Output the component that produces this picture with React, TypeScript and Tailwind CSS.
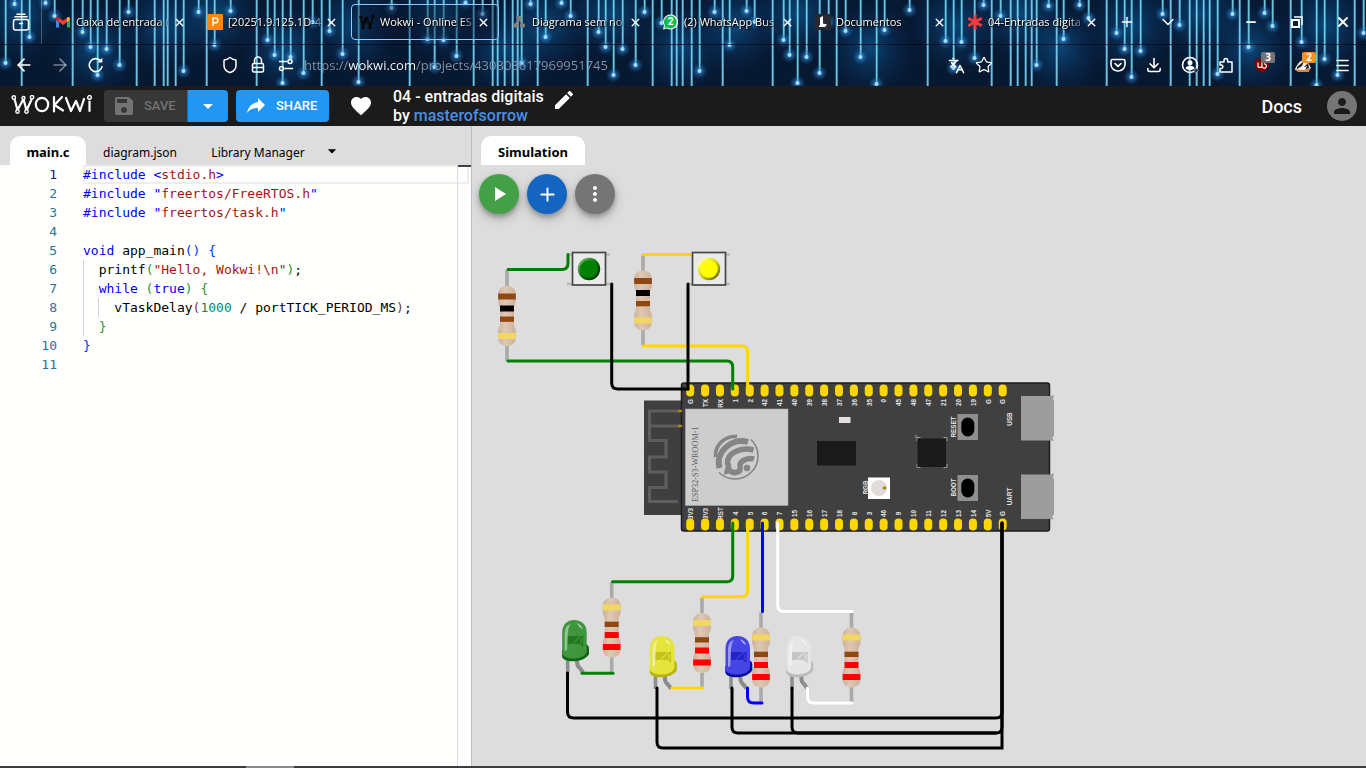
import React from "react";
import { ArrowLeft, ArrowRight, ChevronDown, Download, Languages, Menu, Minus, Plus, Shield, Star, X } from "lucide-react";
import { MdArrowDropDown, MdEdit, MdFavorite, MdMoreVert, MdPerson, MdPlayArrow, MdSave } from "react-icons/md";

/* ---------- Browser theme ---------- */

const FULL_BEAMS = [
  21, 72, 136, 154, 163, 167, 175, 206, 256, 321, 409, 473, 492, 497, 504, 512, 517, 537, 587, 652, 671, 676, 682, 691,
  722, 772, 836, 927, 991, 1010, 1017, 1025, 1031, 1056, 1106, 1170, 1189, 1196, 1203, 1209, 1239, 1290, 1354,
];

const DROPS: [number, number][] = [
  [14, 4], [45, 3], [54, 16], [29, 37], [5, 63], [82, 32], [90, 47], [106, 49], [97, 75], [119, 65], [128, 12],
  [183, 71], [198, 12], [230, 11], [214, 45], [267, 40], [274, 55], [290, 57], [282, 83], [303, 73], [312, 22],
  [329, 31], [342, 54], [358, 82], [391, 8], [427, 39], [443, 40], [456, 56], [434, 67], [482, 14], [465, 3],
  [530, 4], [561, 3], [545, 37], [570, 16], [598, 32], [605, 47], [622, 49], [613, 75], [635, 65], [644, 12],
  [521, 63], [661, 23], [699, 71], [714, 12], [729, 45], [746, 11], [754, 22], [783, 40], [789, 55], [806, 57], [797, 83],
  [819, 73], [828, 22], [845, 31], [860, 57], [884, 30], [876, 84], [909, 10], [945, 41], [953, 68], [961, 42],
  [974, 58], [983, 5], [1000, 16], [1036, 65], [1048, 6], [1079, 5], [1063, 39], [1088, 18], [1116, 33],
  [1124, 49], [1140, 51], [1131, 77], [1162, 14], [1179, 25], [1217, 74], [1232, 14], [1264, 13], [1248, 47],
  [1272, 26], [1301, 42], [1324, 59], [1316, 85], [1337, 75], [1363, 33],
];

const CLOUDS = [20, 95, 165, 215, 285, 355, 440, 505, 545, 610, 680, 735, 797, 870, 955, 1020, 1060, 1131, 1200, 1250, 1325];

function Wallpaper() {
  return (
    <svg className="absolute inset-0 h-full w-full" aria-hidden="true">
      <defs>
        <radialGradient id="cloud">
          <stop offset="0" stopColor="#0d5a96" stopOpacity="0.7" />
          <stop offset="1" stopColor="#08305f" stopOpacity="0" />
        </radialGradient>
        <radialGradient id="glow">
          <stop offset="0" stopColor="#4fb4ff" stopOpacity="0.75" />
          <stop offset="1" stopColor="#1566b4" stopOpacity="0" />
        </radialGradient>
      </defs>
      <rect width="100%" height="100%" fill="#071831" />
      {CLOUDS.map((x, i) => (
        <ellipse key={x} cx={x} cy={i % 3 === 0 ? 14 : i % 3 === 1 ? 48 : 26} rx="46" ry="50" fill="url(#cloud)" />
      ))}
      {FULL_BEAMS.map((x) => (
        <g key={x}>
          <rect x={x - 1} width="3" height="86" fill="#2f8fc0" opacity="0.45" />
          <rect x={x} width="1.5" height="86" fill="#8fdcf2" opacity="0.8" />
        </g>
      ))}
      {DROPS.map(([x, y]) => (
        <g key={`${x}-${y}`}>
          <rect x={x - 1} width="3" height={y} fill="#2f8fc0" opacity="0.45" />
          <rect x={x} width="1.5" height={y} fill="#7fe0ee" opacity="0.8" />
          <circle cx={x + 0.5} cy={y} r="8" fill="url(#glow)" />
          <circle cx={x + 0.5} cy={y} r="2" fill="#a5dcff" />
        </g>
      ))}
      <rect y="44" width="100%" height="1" fill="#020a18" opacity="0.7" />
    </svg>
  );
}

const GmailIcon = () => (
  <svg viewBox="0 0 16 16" className="size-4">
    <path d="M1 4.5V13.5H4V7Z" fill="#4285f4" />
    <path d="M15 4.5V13.5H12V7Z" fill="#34a853" />
    <path d="M1 4.5Q1 2.5 3 3L4 3.7V8L1 5.8Z" fill="#c5221f" />
    <path d="M4 3.7L8 6.8L12 3.7V8L8 11L4 8Z" fill="#ea4335" />
    <path d="M15 4.5Q15 2.5 13 3L12 3.7V8L15 5.8Z" fill="#fbbc04" />
  </svg>
);

const PIcon = () => (
  <svg viewBox="0 0 16 16" className="size-4">
    <rect width="16" height="16" rx="1" fill="#ff8a00" />
    <path d="M6 12V4H8.5a2.4 2.4 0 0 1 0 4.8H6" fill="none" stroke="#fff" strokeWidth="1.4" />
  </svg>
);

const WokwiIcon = () => (
  <svg viewBox="0 0 16 16" className="size-4" fill="none" stroke="#070707" strokeWidth="1.8" strokeLinecap="round">
    <path d="M2 3L4 13L8 4L11 13L14 3M4 13L6 4M11 13L9 9" />
    <g fill="#070707" strokeWidth="1">
      <circle cx="2" cy="3" r="1.2" />
      <circle cx="8" cy="4" r="1" />
      <circle cx="14" cy="2.5" r="1.3" />
      <circle cx="4" cy="13.5" r="1.2" />
      <circle cx="11" cy="13.5" r="1.2" />
    </g>
  </svg>
);

const DiagramIcon = () => (
  <svg viewBox="0 0 16 16" className="size-4" fill="#85817e">
    <rect x="5.500" y="2" width="5" height="4" rx="1" />
    <rect x="2" y="9.500" width="5" height="4" rx="1" />
    <rect x="9" y="9.500" width="5" height="4" rx="1" />
    <path d="M8 5L4.5 10.500M8 5L11.500 10.500" stroke="#85817e" strokeWidth="1.5" />
  </svg>
);

const WhatsAppIcon = () => (
  <svg viewBox="0 0 16 16" className="size-4">
    <path d="M0 15.5L1 11.6A7.500 7.500 0 1 1 4 14.6Z" fill="#fff" />
    <path d="M1.300 14.3L2 11.6A6.400 6.400 0 1 1 4.200 13.6Z" fill="#13b955" />
    <text x="7.6" y="11.4" textAnchor="middle" fontSize="10" fontWeight="700" fill="#fff" fontFamily="Roboto, sans-serif">2</text>
  </svg>
);

const DocIcon = () => (
  <svg viewBox="0 0 16 16" className="size-4">
    <rect width="16" height="16" fill="#292a30" />
    <path d="M5 3.5L8 2V9.5L12 10.5L10 13H4V11.5H5Z" fill="#fff" />
  </svg>
);

const AsteriskIcon = () => (
  <svg viewBox="0 0 16 16" className="size-4" stroke="#ff3b3b" strokeWidth="3">
    <path d="M8 .5V15.5M1.3 4.2L14.7 11.8M14.7 4.2L1.3 11.8" />
  </svg>
);

const TABS = [
  { title: "Caixa de entrada (", Icon: GmailIcon },
  { title: "[20251.9.125.1D-4", Icon: PIcon },
  { title: "Wokwi - Online ES", Icon: WokwiIcon, active: true },
  { title: "Diagrama sem no", Icon: DiagramIcon },
  { title: "(2) WhatsApp Bus", Icon: WhatsAppIcon },
  { title: "Documentos", Icon: DocIcon },
  { title: "04-Entradas digita", Icon: AsteriskIcon },
];

function BrowserTab({ title, Icon, active }: { title: string; Icon: React.FC; active?: boolean }) {
  return (
    <div className="min-w-0 max-w-[152px] flex-1 py-1 pl-px pr-[3px]">
      <div
        className={`flex h-9 items-center rounded border px-[7px] ${active ? "border-[#8fcaff] bg-[#07142c]/40" : "border-transparent"}`}
      >
        <button className="flex min-w-0 flex-1 items-center gap-[5px] text-left">
          <span className="shrink-0"><Icon /></span>
          <span className="flex-1 overflow-hidden whitespace-nowrap text-[11px] leading-5 [mask-image:linear-gradient(to_right,black_84%,rgba(0,0,0,0.2)_100%)] [text-shadow:0_0_2px_#000,1px_1px_1px_#000]">
            {title}
          </span>
        </button>
        <button aria-label={`Fechar ${title}`} className="flex size-4 shrink-0 items-center justify-center">
          <X size={13} strokeWidth={2.6} />
        </button>
      </div>
    </div>
  );
}

const IconButton = ({ label, className = "w-9", children }: { label: string; className?: string; children: React.ReactNode }) => (
  <button aria-label={label} className={`flex h-8 shrink-0 items-center justify-center ${className}`}>
    {children}
  </button>
);

function BrowserChrome() {
  return (
    <header className="relative flex h-[86px] shrink-0 flex-col overflow-hidden bg-[#06152f] font-['Open_Sans',sans-serif] text-white">
      <Wallpaper />
      <div className="relative flex h-11 items-center">
        <div className="mr-1 flex h-11 w-[42px] shrink-0 items-center justify-center border-r border-white/25">
          <button aria-label="Firefox View">
            <svg viewBox="0 0 18 18" className="size-[18px]" fill="none" stroke="currentColor" strokeWidth="1.5" strokeLinecap="round">
              <rect x="1.5" y="6.5" width="15" height="10.5" rx="2" />
              <path d="M3 3.8H15M5 1.2H13M7.5 10.5H10.5" />
            </svg>
          </button>
        </div>
        <nav className="flex min-w-0 flex-1">
          {TABS.map((t) => (
            <BrowserTab key={t.title} {...t} />
          ))}
          <div className="flex items-center self-center">
            <IconButton label="Nova aba" className="w-[34px]"><Plus size={16} strokeWidth={2} /></IconButton>
            <IconButton label="Listar abas" className="w-12"><ChevronDown size={20} strokeWidth={1.8} /></IconButton>
          </div>
        </nav>
        <IconButton label="Minimizar" className="w-[46px]"><Minus size={14} strokeWidth={3} /></IconButton>
        <IconButton label="Restaurar" className="w-[46px]">
          <svg viewBox="0 0 12 12" className="size-3" fill="none" stroke="currentColor">
            <rect x="1" y="4" width="7" height="7" strokeWidth="2" />
            <path d="M3 1H11V9" strokeWidth="1.4" />
          </svg>
        </IconButton>
        <IconButton label="Fechar" className="w-[46px]"><X size={16} strokeWidth={2.8} /></IconButton>
      </div>

      <div className="relative flex h-[42px] items-center px-[6px]">
        <IconButton label="Voltar"><ArrowLeft size={20} strokeWidth={2} /></IconButton>
        <IconButton label="Avançar"><ArrowRight size={20} strokeWidth={2} className="text-white/45" /></IconButton>
        <IconButton label="Recarregar">
          <svg viewBox="0 0 16 16" className="size-4" fill="none" stroke="currentColor" strokeWidth="1.6">
            <path d="M14.2 9.2A6.5 6.5 0 1 1 12.3 3.4" />
            <path d="M9.5 5.5H14.3V.8Z" fill="currentColor" stroke="none" />
          </svg>
        </IconButton>
        <div className="ml-[102px] flex min-w-0 flex-1 items-center">
          <IconButton label="Proteção" className="w-7"><Shield size={18} strokeWidth={2} /></IconButton>
          <IconButton label="Conexão segura" className="w-7">
            <svg viewBox="0 0 16 18" className="h-[18px] w-4" fill="none" stroke="currentColor" strokeWidth="1.5">
              <rect x="2.5" y="7.5" width="11" height="8.5" rx="1.5" />
              <path d="M4.5 7.5V4.5A3.5 3.5 0 0 1 11.5 4.5V7.5M2.5 11.5H13.5" />
            </svg>
          </IconButton>
          <IconButton label="Permissões" className="w-7">
            <svg viewBox="0 0 16 16" className="size-4" fill="none" stroke="currentColor" strokeWidth="1.5">
              <path d="M1 4.5H9M6.5 11.5H15" />
              <circle cx="12" cy="4.5" r="2" />
              <circle cx="3.5" cy="11.5" r="2" />
            </svg>
          </IconButton>
          <input
            aria-label="Endereço"
            readOnly
            value="https://wokwi.com/projects/430303617969951745"
            className="ml-1 h-7 min-w-0 flex-1 bg-[linear-gradient(to_right,#8793a5_45px,#fff_45px,#fff_112px,#8793a5_112px)] bg-clip-text text-[13px] text-transparent outline-none"
          />
          <IconButton label="Traduzir" className="w-7"><Languages size={17} strokeWidth={2.2} /></IconButton>
          <IconButton label="Favoritar" className="w-7"><Star size={18} strokeWidth={1.7} /></IconButton>
        </div>
        <div className="ml-[102px] flex items-center">
          <IconButton label="Pocket">
            <svg viewBox="0 0 16 16" className="size-4" fill="none" stroke="currentColor" strokeWidth="1.6" strokeLinecap="round" strokeLinejoin="round">
              <path d="M2.5 2.5H13.5Q15 2.5 15 4V7.5A7 6.5 0 0 1 1 7.5V4Q1 2.5 2.5 2.5ZM5 6.5L8 9.3L11 6.5" />
            </svg>
          </IconButton>
          <IconButton label="Downloads">
            <svg viewBox="0 0 16 16" className="size-4" fill="none" stroke="currentColor" strokeWidth="1.6" strokeLinecap="round" strokeLinejoin="round">
              <path d="M8 1.5V10.5M4 6.800L8 10.800L12 6.800M1.800 11.500V12.500Q1.800 14.500 3.800 14.500H12.200Q14.200 14.500 14.200 12.500V11.500" />
            </svg>
          </IconButton>
          <IconButton label="Conta">
            <svg viewBox="0 0 18 18" className="size-[18px]">
              <circle cx="9" cy="9" r="7.5" fill="none" stroke="currentColor" strokeWidth="1.6" />
              <circle cx="9" cy="6.8" r="2.5" fill="currentColor" />
              <path d="M4.5 12.5Q5 9.8 9 9.8T13.5 12.5Q9 15.8 4.5 12.5Z" fill="currentColor" />
              <circle cx="15" cy="14.5" r="2" fill="#17304d" stroke="#8797a8" />
            </svg>
          </IconButton>
          <IconButton label="Extensões">
            <svg viewBox="0 0 16 16" className="size-4" fill="none" stroke="currentColor" strokeWidth="1.5" strokeLinejoin="round">
              <path d="M2 15V11.5H3.5A1.8 1.8 0 0 0 3.5 8H2V5H6V3.2A1.8 1.8 0 0 1 9.6 3.2V5H14V15Z" />
            </svg>
          </IconButton>
          <div className="relative">
            <IconButton label="uBlock Origin">
              <svg viewBox="0 0 16 16" className="size-4">
                <path d="M8 1L15 3V8Q14 13 8 16Q2 13 1 8V3Z" fill="#800000" />
                <path d="M4 5.5V8.5A2 2 0 0 0 8 8.5V5.5M8 8.5A2.2 2.2 0 1 0 10 6.8" stroke="#fff" strokeWidth="1.2" fill="none" />
              </svg>
            </IconButton>
            <span className="absolute left-[17px] top-[3px] flex h-[11px] w-[14px] items-center justify-center rounded-[2px] bg-[#737373] text-[10px] font-bold">3</span>
          </div>
          <div className="relative ml-[5px]">
            <IconButton label="Privacy Badger">
              <svg viewBox="0 0 16 16" className="size-4">
                <path d="M0 12Q3 5 8 3L12 4Q14 7 16 11L13 14Q6 16 0 13Z" fill="#eee" />
                <path d="M2 10L9 4L7 9L2 12ZM9 10L13 6L14 11L10 13Z" fill="#222" />
                <path d="M0 12L6 13L15 11L14 15H3Z" fill="#d98241" />
                <path d="M5 12L12 9L10 13Z" fill="#fff" />
              </svg>
            </IconButton>
            <span className="absolute left-[17px] top-[3px] flex h-[11px] w-[14px] items-center justify-center rounded-[2px] bg-[#f19226] text-[10px] font-bold">2</span>
          </div>
          <IconButton label="Menu" className="ml-[3px] w-9"><Menu size={17} strokeWidth={2} /></IconButton>
        </div>
      </div>
    </header>
  );
}

/* ---------- Wokwi header ---------- */

const WokwiLogo = () => (
  <svg viewBox="0 0 82 22" className="h-[22px] w-[82px]" fill="none" stroke="#fff" strokeWidth="2.2" strokeLinecap="round" strokeLinejoin="round" role="img" aria-label="Wokwi">
    <path d="M3.5 4L6.5 15L12.5 4L15.5 15.5L21 3.5" />
    <ellipse cx="31" cy="9.5" rx="6.2" ry="6.7" />
    <path d="M43 2V16.5M51 2L43.5 10L52 15.5" />
    <path d="M55 3L60 16L65 6L69 16L73 4" />
    <path d="M78.5 6.5V16" />
    <g fill="#1b1b1b" strokeWidth="1.4">
      <circle cx="2.8" cy="2.5" r="1.7" />
      <circle cx="12.5" cy="3" r="1.5" />
      <circle cx="21" cy="2.2" r="1.7" />
      <circle cx="6.5" cy="16.5" r="1.7" />
      <circle cx="15.5" cy="16.5" r="1.7" />
      <circle cx="78.5" cy="2.4" r="1.8" />
    </g>
  </svg>
);

function AppHeader() {
  return (
    <header className="flex h-10 shrink-0 items-center bg-[#1b1b1b] px-[9px] font-['Roboto',sans-serif] text-white">
      <a href="#home" className="ml-[2px]"><WokwiLogo /></a>
      <div className="ml-[11px] flex h-8 overflow-hidden rounded">
        <button disabled className="flex w-[84px] items-center gap-2 border-r border-[#5b5b5b] bg-[#373737] pl-2 text-[13px] font-medium text-[#737373]">
          <MdSave size={24} />
          <span>SAVE</span>
        </button>
        <button aria-label="Mais opções de salvar" className="flex w-10 items-center justify-center bg-[#2196f3]">
          <MdArrowDropDown size={24} />
        </button>
      </div>
      <button className="ml-2 flex h-8 w-[93px] items-center gap-2 rounded bg-[#2196f3] pl-2 text-[13px] font-medium">
        <svg viewBox="0 0 24 24" className="size-6" fill="currentColor">
          <path d="M21 11L14 4V8C7 9 4 14 3 19C5.5 15.5 9 13.9 14 13.9V18Z" />
        </svg>
        <span>SHARE</span>
      </button>
      <button aria-label="Curtir" className="ml-5"><MdFavorite size={24} /></button>
      <div className="ml-5 text-[16px] font-medium leading-[19px]">
        <h1>04 - entradas digitais</h1>
        <p>by <a href="#user" className="text-[#4a8fe7]">masterofsorrow</a></p>
      </div>
      <button aria-label="Editar título" className="mb-3 ml-2"><MdEdit size={24} /></button>
      <a href="#docs" className="ml-auto text-[18px] font-medium">Docs</a>
      <button aria-label="Conta" className="ml-[25px] flex size-[30px] items-center justify-center rounded-full bg-[#757575] text-[#1b1b1b]">
        <MdPerson size={24} />
      </button>
    </header>
  );
}

/* ---------- Editor ---------- */

const K = "text-[#0000ff]";
const S = "text-[#a31515]";
const B1 = "text-[#0431fa]";
const B2 = "text-[#319331]";
const B3 = "text-[#7b3814]";
const N = "text-[#098658]";

const CODE: [string, string][][] = [
  [["#include <", K], ["stdio.h", S], [">", K]],
  [["#include \"", K], ["freertos/FreeRTOS.h", S], ["\"", K]],
  [["#include \"", K], ["freertos/task.h", S], ["\"", K]],
  [],
  [["void", K], [" app_main", ""], ["() {", B1]],
  [["  printf", ""], ["(", B2], ["\"Hello, Wokwi!\\n\"", S], [")", B2], [";", ""]],
  [["  ", ""], ["while", K], [" (", B2], ["true", K], [") {", B2]],
  [["    vTaskDelay", ""], ["(", B3], ["1000", N], [" / portTICK_PERIOD_MS", ""], [")", B3], [";", ""]],
  [["  }", B2]],
  [["}", B1]],
  [],
];

function EditorPane() {
  return (
    <section className="flex w-[472px] shrink-0 flex-col border-r border-[#bdbdbd] bg-[#fffffe]">
      <div role="tablist" className="flex h-[39px] items-end bg-[#dddddd] pl-[10px] font-['Noto_Sans',sans-serif] text-black">
        <button role="tab" aria-selected="true" className="h-[29px] w-[76px] rounded-t-[10px] bg-white pt-1 text-[13px] font-bold">main.c</button>
        <button role="tab" className="h-[29px] w-[108px] pt-1 text-[12px]">diagram.json</button>
        <button role="tab" className="h-[29px] w-32 pt-1 text-[12px]">Library Manager</button>
        <button aria-label="Mais arquivos" className="flex h-[29px] items-center"><MdArrowDropDown size={20} /></button>
      </div>
      <div className="flex flex-1 font-['DejaVu_Sans_Mono',monospace] text-[13px] leading-[19px]">
        <ol className="w-[57px] shrink-0 text-right text-[#237893]">
          {CODE.map((_, i) => (
            <li key={i} className={i === 0 ? "text-[#0b216f]" : ""}>{i + 1}</li>
          ))}
        </ol>
        <pre className="ml-[26px] min-w-0 flex-1 font-['DejaVu_Sans_Mono',monospace] text-black">
          {CODE.map((line, i) => (
            <div key={i} className={`relative h-[19px] ${i === 0 ? "-mr-3 shadow-[inset_0_0_0_2px_#eeeeee]" : ""}`}>
              {i > 4 && i < 9 && <span className="absolute inset-y-0 left-0 w-px bg-[#d3d3d3]" />}
              {i === 7 && <span className="absolute inset-y-0 left-[15px] w-px bg-[#d3d3d3]" />}
              {line.map(([text, color], j) => (
                <span key={j} className={color}>{text}</span>
              ))}
            </div>
          ))}
        </pre>
        <div className="relative flex w-[14px] flex-col border-l border-[#dddddd]">
          <span className="h-[2px] bg-[#424242]" />
        </div>
      </div>
    </section>
  );
}

/* ---------- Circuit ---------- */

function Resistor({ x, y, bands, flip }: { x: number; y: number; bands: string[]; flip?: boolean }) {
  return (
    <g transform={flip ? `translate(${x} ${y + 91}) scale(1 -1)` : `translate(${x} ${y})`}>
      <path d="M0 0V91" stroke="#aaa" strokeWidth="3.6" />
      <path
        d="M0 16C-6 16-9 20-9 25V30C-9 34-7 35-7 38V54C-7 57-9 58-9 62V67C-9 72-6 76 0 76S9 72 9 67V62C9 58 7 57 7 54V38C7 35 9 34 9 30V25C9 20 6 16 0 16Z"
        fill="url(#resistor)"
      />
      <rect x="-8.8" y="23.5" width="17.6" height="6" fill={bands[0]} />
      <rect x="-7" y="35.5" width="14" height="6" fill={bands[1]} />
      <rect x="-7" y="46.5" width="14" height="5.3" fill={bands[2]} />
      <rect x="-8.8" y="63" width="17.6" height="6" fill="#f1d863" />
    </g>
  );
}

const BROWN = "#8f4814";
const R1K = [BROWN, "#000", BROWN];
const R220 = ["#f00", "#f00", BROWN];

function Led({ x, y, body, dark, side }: { x: number; y: number; body: string; dark: string; side: string }) {
  return (
    <g transform={`translate(${x} ${y})`}>
      <path d="M6 38V53" stroke="#8f8f8f" strokeWidth="3.6" />
      <path d="M15.5 38V43Q15.5 46 18 48L21.5 52.5" stroke="#8c8c8c" strokeWidth="4" fill="none" />
      <path d="M24.5 24Q27.5 26 27.3 28V34C24 42 4 44 .3 37V30Z" fill={side} />
      <path d="M.5 12.5C.5 4 6 0 12.5 0S25 4 25 12.5V32C23 40 5 41 .5 34.5Z" fill={body} />
      <path d="M.5 34.5C5 41 23 40 25 32" fill="none" stroke={dark} strokeWidth=".8" opacity=".6" />
      <path d="M6 16H21.5V27L18 24H6ZM6 16L8 24" fill={dark} opacity=".75" />
      <path d="M11 23.5L19 16M19.5 18V24" stroke={body} strokeWidth="1.4" opacity=".7" />
      <path d="M3 31V13C3.5 8 5 5 9 4C6 8 6 12 5.5 30Z" fill="#fff" opacity=".45" />
      <path d="M15 3Q20 5 21 9Q18 8 15 3Z" fill="#fff" opacity=".6" />
    </g>
  );
}

function PushButton({ x, color, gradient }: { x: number; color: string; gradient: string }) {
  return (
    <g transform={`translate(${x} 251)`}>
      <path d="M-5 3.5H38M-5 33H38" stroke="#b9b9b9" strokeWidth="2.4" />
      <rect x=".5" y="1.5" width="33" height="32.5" fill="#eaeaea" stroke="#464646" strokeWidth="1.7" />
      <circle cx="17" cy="18" r="11.2" fill={`url(#${gradient})`} />
      <circle cx="17" cy="18" r="8.8" fill={color} />
    </g>
  );
}

const TOP_PINS = ["G", "TX", "RX", "1", "2", "42", "41", "40", "39", "38", "37", "36", "35", "0", "45", "48", "47", "21", "20", "19", "G", "G"];
const BOTTOM_PINS = ["3V3", "3V3", "RST", "4", "5", "6", "7", "15", "16", "17", "18", "8", "3", "46", "9", "10", "11", "12", "13", "14", "5V", "G"];
const pinX = (i: number) => 690.2 + i * 14.88;

function Label({ x, y, anchor = "middle", children }: { x: number; y: number; anchor?: "middle" | "end"; children: string }) {
  return (
    <text transform={`translate(${x} ${y}) rotate(-90)`} textAnchor={anchor} fontSize="6.3" fontFamily="Liberation Sans, sans-serif" fontWeight="700" fill="#e6e6e6">
      {children}
    </text>
  );
}

function Board() {
  return (
    <g>
      <rect x="644" y="400.5" width="40" height="114.5" fill="#3f3f3f" />
      <path d="M680 411H649.5V440.5H666V457H649.5V472H666V487.5H649.5V501.5H678M651 426H680" fill="none" stroke="#5e5e5e" strokeWidth="3.2" />
      <rect x="681.5" y="383" width="368" height="148" rx="2.5" fill="#404040" stroke="#1d1d20" strokeWidth="1.5" />
      <path d="M678 411H682M678 426H682" stroke="#a8820c" strokeWidth="2.5" />
      <rect x="685.5" y="409" width="102.5" height="96.5" fill="#cdcdcd" stroke="#aaa" strokeWidth=".6" />
      <text transform="translate(698 502) rotate(-90)" fontSize="8.2" fontFamily="Liberation Serif, serif" fill="#606060">ESP32-S3-WROOM-1</text>
      <g fill="none" stroke="#858585">
        <path d="M751 439.5A21 21 0 0 1 719 472.5" strokeWidth="1.6" />
        <path d="M715.5 457C714.5 445 725 435.5 737 436.5" strokeWidth="3.5" />
        <path d="M719.5 468C715 452 732 437 748 442" strokeWidth="6" />
        <path d="M727 474C725.5 470 731 469 727.5 463C727 453 741 446.5 753.5 450" strokeWidth="5.5" />
        <path d="M729 470C733 474 742 474 740 465C740 461 748 457 754 459" strokeWidth="5.5" />
      </g>
      <circle cx="747" cy="468" r="3.2" fill="#858585" />
      <rect x="817" y="441" width="39" height="24.5" fill="#1a1a1a" />
      <rect x="839" y="417" width="11.5" height="6" fill="#e4dfdf" />
      <rect x="868" y="477.5" width="22" height="21.5" fill="#fff" />
      <circle cx="879" cy="488" r="8" fill="#e1dcda" />
      <circle cx="884.5" cy="488" r="1.8" fill="#a5801a" />
      <path d="M917 441V437.5H920.5M943.5 437.5H947V441M917 464V467.5H920.5M943.5 467.5H947V464" fill="none" stroke="#999" strokeWidth="1" />
      <rect x="917.5" y="438.5" width="28.5" height="28.5" fill="#1a1a1a" />
      <circle cx="916" cy="436.5" r="1.2" fill="none" stroke="#999" strokeWidth=".7" />
      {[414, 475].map((y) => (
        <g key={y}>
          <rect x="957.5" y={y} width="20.5" height="26" fill="#8f8f8f" />
          <rect x="961.3" y={y + 3.5} width="13" height="19" rx="6.5" fill="#000" />
        </g>
      ))}
      {[396, 474.5].map((y) => (
        <path key={y} d={`M1021 ${y}H1050L1054 ${y - 1}L1053 ${y + 3}L1054 ${y + 5}V${y + 40}L1052 ${y + 42}L1054 ${y + 45}L1050 ${y + 44.5}H1021Z`} fill="#9d9d9d" />
      ))}
      {TOP_PINS.map((label, i) => (
        <g key={i}>
          <rect x={pinX(i) - 4} y="384.5" width="8" height="12" rx="3.8" fill="#ffd700" />
          <Label x={pinX(i) + 2.8} y={399} anchor="end">{label}</Label>
        </g>
      ))}
      {BOTTOM_PINS.map((label, i) => (
        <g key={i}>
          <Label x={pinX(i) + 2.8} y={513.5}>{label}</Label>
          <rect x={pinX(i) - 4} y="518.5" width="8" height="12" rx="3.8" fill="#ffd700" />
        </g>
      ))}
      <Label x={956} y={427}>RESET</Label>
      <Label x={956} y={487.5}>BOOT</Label>
      <Label x={1012} y={419}>USB</Label>
      <Label x={1012} y={496.5}>UART</Label>
      <Label x={868} y={487.5}>RGB</Label>
    </g>
  );
}

const WIRES: [string, string][] = [
  ["green", "M508 269.5H562Q568 269.5 568 263V254.5"],
  ["green", "M508 361H727Q732.7 361 732.7 367V389"],
  ["gold", "M643 254.5H690"],
  ["gold", "M643 346H742Q747.6 346 747.6 352V388"],
  ["black", "M611.7 284V383Q611.7 389 618 389H688"],
  ["black", "M688 284V389"],
  ["green", "M732.7 523V576Q732.7 581.7 727 581.7H612.5"],
  ["gold", "M747.6 523V591Q747.6 596.7 742 596.7H702.5"],
  ["blue", "M762.5 523V611.5"],
  ["white", "M777.7 523V605Q777.7 611.5 784 611.5H852"],
  ["green", "M582 673.3H613"],
  ["gold", "M672 688H703"],
  ["blue", "M747.5 688V697Q747.5 703 754 703H762"],
  ["white", "M807.5 688V697Q807.5 703 814 703H852"],
  ["black", "M567.5 673V712Q567.5 718 574 718H996Q1002 718 1002 712V523"],
  ["black", "M657 688V742Q657 748 663 748H1002V523"],
  ["black", "M732 688V727Q732 733 738 733H996Q1002 733 1002 727V523"],
  ["black", "M792 688V727Q792 733 798 733H996"],
];

function Circuit() {
  return (
    <svg className="absolute inset-0 h-full w-full" role="img" aria-label="Diagrama do circuito">
      <defs>
        <linearGradient id="resistor">
          <stop offset="0" stopColor="#cbb29d" />
          <stop offset=".4" stopColor="#dfc8b3" />
          <stop offset="1" stopColor="#cdb29c" />
        </linearGradient>
        <linearGradient id="green-cap" x1="0" y1="0" x2="1" y2="1">
          <stop offset=".15" stopColor="#5faf5f" />
          <stop offset=".5" stopColor="#007000" />
          <stop offset=".9" stopColor="#003000" />
        </linearGradient>
        <linearGradient id="yellow-cap" x1="0" y1="0" x2="1" y2="1">
          <stop offset=".15" stopColor="#ffff80" />
          <stop offset=".5" stopColor="#d0d000" />
          <stop offset=".9" stopColor="#686800" />
        </linearGradient>
      </defs>
      <g transform="translate(-472 -165)">
        <Board />
        <Resistor x={507} y={270} bands={R1K} />
        <Resistor x={643} y={254.5} bands={R1K} />
        <Resistor x={611.7} y={582.5} bands={R220} flip />
        <Resistor x={702} y={598} bands={R220} flip />
        <Resistor x={761} y={612.5} bands={R220} flip />
        <Resistor x={851.5} y={612.5} bands={R220} flip />
        <PushButton x={572} color="#008000" gradient="green-cap" />
        <PushButton x={692} color="#ffff00" gradient="yellow-cap" />
        <Led x={561.7} y={620} body="#3f963f" dark="#176f17" side="#0c6812" />
        <Led x={649.5} y={636} body="#e4e43c" dark="#b8b80e" side="#b4b40b" />
        <Led x={725} y={636} body="#4545e4" dark="#1a1ab7" side="#0b0ba5" />
        <Led x={786} y={636} body="#e6e6e6" dark="#b9b9b9" side="#bcbcbc" />
        <g fill="none" strokeWidth="3" strokeLinecap="round">
          {WIRES.map(([color, d]) => (
            <path key={d} d={d} stroke={color} />
          ))}
        </g>
      </g>
    </svg>
  );
}

const FAB = "flex size-10 items-center justify-center rounded-full text-white shadow-[0_3px_5px_rgba(0,0,0,0.25),0_5px_12px_rgba(0,0,0,0.18)]";

function SimulationPane() {
  return (
    <section className="flex min-w-0 flex-1 flex-col bg-[#dddddd]">
      <div role="tablist" className="flex h-[39px] items-end pl-[9px] font-['Noto_Sans',sans-serif] text-[13px] font-bold text-black">
        <button role="tab" aria-selected="true" className="h-[29px] w-[104px] rounded-t-[10px] bg-white pt-1">Simulation</button>
      </div>
      <div className="relative flex-1 overflow-hidden">
        <Circuit />
        <div className="absolute left-[7px] top-[9px] flex gap-2">
          <button aria-label="Iniciar simulação" className={`${FAB} bg-[#43a047]`}><MdPlayArrow size={24} /></button>
          <button aria-label="Adicionar peça" className={`${FAB} bg-[#1565c0]`}><Plus size={21} strokeWidth={2.2} /></button>
          <button aria-label="Mais opções" className={`${FAB} bg-[#757575]`}><MdMoreVert size={24} /></button>
        </div>
      </div>
    </section>
  );
}

export default function App() {
  return (
    <div className="flex min-h-screen flex-col bg-[#dddddd]">
      <BrowserChrome />
      <AppHeader />
      <main className="flex flex-1">
        <EditorPane />
        <SimulationPane />
      </main>
      <footer className="flex h-[2px] shrink-0 bg-[#3c3c3e]">
        <span className="ml-[246px] w-12 bg-[#8a8a8a]" />
      </footer>
    </div>
  );
}
